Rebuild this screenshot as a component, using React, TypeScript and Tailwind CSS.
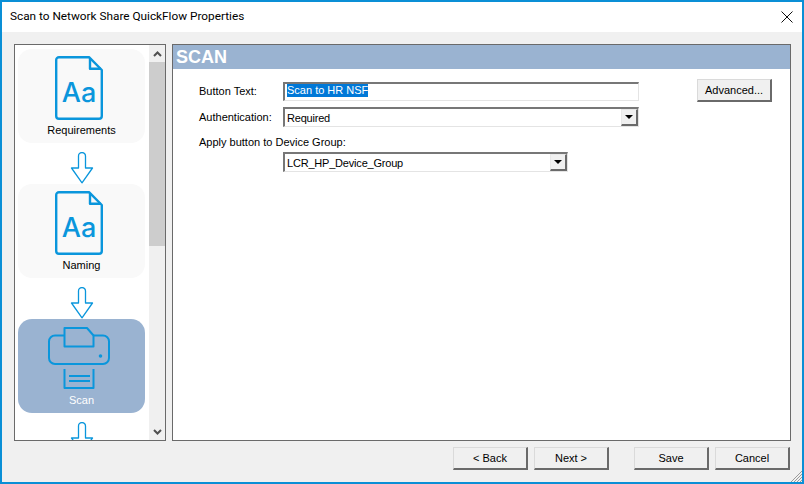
function DocIcon() {
  return (
    <svg width="48" height="64" viewBox="0 0 48 64" fill="none" className="block">
      <path d="M4 1.200H34L46.800 14V60a2.800 2.800 0 0 1-2.800 2.800H4A2.800 2.800 0 0 1 1.200 60V4A2.800 2.800 0 0 1 4 1.200Z" stroke="#0a96dc" strokeWidth="2.400" strokeLinejoin="round" />
      <path d="M35 2V12.800H46" stroke="#0a96dc" strokeWidth="2.400" strokeLinejoin="round" />
      <text x="24" y="46" textAnchor="middle" fill="#0a96dc" fontSize="27" fontFamily="Inter, 'Liberation Sans', sans-serif" fontWeight="500">Aa</text>
    </svg>
  );
}

function PrinterIcon() {
  return (
    <svg width="62" height="62" viewBox="0 0 62 62" fill="none" className="mt-[1px] block" stroke="#0a96dc" strokeWidth="2">
      <path d="M16 8.500H7a6 6 0 0 0-6 6V31a6 6 0 0 0 6 6H55a6 6 0 0 0 6-6V14.500a6 6 0 0 0-6-6H45" />
      <path d="M16.500 1H39L45.500 8.500V19.500H16.500Z" strokeLinejoin="round" />
      <circle cx="52.500" cy="29" r="0.800" fill="#0a96dc" />
      <path d="M16.500 42V61H45.500V42" strokeLinejoin="round" />
      <path d="M21 49H42M21 54H42" />
    </svg>
  );
}

function DownArrow() {
  return (
    <svg width="24" height="32" viewBox="0 0 24 32" fill="none" className="block">
      <path d="M8.500 16V4a3.500 3.500 0 0 1 7 0V16H22.500L12 30.800 1.500 16Z" fill="#fff" stroke="#0a96dc" strokeWidth="1.300" strokeLinejoin="round" />
    </svg>
  );
}

function NavCard({ label, active, icon }: { label: string; active?: boolean; icon: React.ReactNode }) {
  return (
    <div className={`flex h-[94px] w-[127px] shrink-0 flex-col items-center rounded-[14px] ${active ? "bg-[#9ab3d1] text-white" : "bg-[#f9f9f9] text-black"}`}>
      <div className="mt-[7px] flex h-[66px] items-start justify-center pr-[5px]">{icon}</div>
      <div className="mt-[1px] text-[11px] leading-[14px]">{label}</div>
    </div>
  );
}

function Arrow() {
  return (
    <div className="flex h-[41px] w-[127px] shrink-0 justify-center pt-[9px]">
      <DownArrow />
    </div>
  );
}

function WinButton({ label, className = "" }: { label: string; className?: string }) {
  return (
    <button className={`flex h-[23px] w-[75px] items-center justify-center border border-b-2 border-r-2 border-[#eeeeee] border-b-[#6a6a6a] border-r-[#6a6a6a] border-l-[#dadada] border-t-[#dadada] bg-[#f0f0f0] text-[11px] text-black ${className}`}>
      {label}
    </button>
  );
}

function SelectBox({ value, widthClass }: { value: string; widthClass: string }) {
  return (
    <div className={`flex h-5 items-stretch border-2 border-b border-r border-[#e4e4e4] border-l-[#777777] border-t-[#777777] bg-white ${widthClass}`}>
      <div className="flex-1 truncate pl-[2px] pt-[2px] text-[11px] leading-[14px] tracking-[-0.2px] text-black">{value}</div>
      <div className="flex w-[17px] items-center justify-center border-b-2 border-r-2 border-[#6a6a6a] border-l border-t border-l-[#e8e8e8] border-t-[#e8e8e8] bg-[#f0f0f0]">
        <svg width="8" height="4" viewBox="0 0 8 4"><path d="M0 0H8L4 4Z" fill="#000" /></svg>
      </div>
    </div>
  );
}

export default function App() {
  return (
    <div className="flex h-[484px] w-[804px] flex-col overflow-hidden border-2 border-[#0a8fd6] bg-[#f0f0f0] font-['Liberation_Sans',sans-serif]">
      <div className="flex h-[30px] shrink-0 items-center justify-between bg-white pl-2 pr-[9px]">
        <span className="font-['Roboto',sans-serif] text-[11.8px] text-black">Scan to Network Share QuickFlow Properties</span>
        <svg width="12" height="12" viewBox="0 0 12 12" stroke="#111" strokeWidth="1" fill="none"><path d="M.5.500L11.500 11.500M11.500.500L.5 11.500" /></svg>
      </div>

      <div className="flex h-[409px] shrink-0 gap-[6px] pl-3 pr-3 pt-3">
        <div className="flex h-[397px] w-[152px] shrink-0 border border-[#6a6a6a] bg-white">
          <div className="flex w-[134px] shrink-0 flex-col overflow-hidden pl-[3px] pt-[4px]">
            <NavCard label="Requirements" icon={<DocIcon />} />
            <Arrow />
            <NavCard label="Naming" icon={<DocIcon />} />
            <Arrow />
            <NavCard label="Scan" active icon={<PrinterIcon />} />
            <Arrow />
          </div>
          <div className="flex w-[16px] shrink-0 flex-col bg-[#f0f0f0]">
            <div className="flex h-[17px] items-center justify-center">
              <svg width="9" height="6" viewBox="0 0 9 6" fill="none" stroke="#505050" strokeWidth="2"><path d="M1 5L4.500 1.500 8 5" /></svg>
            </div>
            <div className="h-[184px] bg-[#cdcdcd]" />
            <div className="flex-1" />
            <div className="flex h-[17px] items-center justify-center">
              <svg width="9" height="6" viewBox="0 0 9 6" fill="none" stroke="#505050" strokeWidth="2"><path d="M1 1L4.500 4.500 8 1" /></svg>
            </div>
          </div>
        </div>

        <div className="flex h-[397px] w-[619px] shrink-0 flex-col border border-[#6a6a6a] bg-white">
          <div className="flex h-6 shrink-0 items-center bg-[#9ab3d1] pl-[3px] text-[18px] font-bold leading-6 text-white">SCAN</div>
          <div className="flex items-start pl-[26px]">
            <div className="flex w-[440px] shrink-0 flex-col pt-[13px] text-[11px] text-black">
              <div className="flex items-center">
                <span className="w-[84px] shrink-0 pb-[1px]">Button Text:</span>
                <div className="flex h-[19px] w-[356px] items-start border-2 border-b border-r border-[#e4e4e4] border-l-[#777777] border-t-[#777777] bg-white pl-[2px]">
                  <span className="bg-[#0078d7] leading-[13px] text-white">Scan to HR NSF</span>
                </div>
              </div>
              <div className="mt-[6px] flex items-center">
                <span className="w-[84px] shrink-0">Authentication:</span>
                <SelectBox value="Required" widthClass="w-[356px]" />
              </div>
              <div className="mt-[8px] leading-[14px]">Apply button to Device Group:</div>
              <div className="mt-[3px] pl-[84px]">
                <SelectBox value="LCR_HP_Device_Group" widthClass="w-[285px]" />
              </div>
            </div>
            <WinButton label="Advanced..." className="ml-[58px] mt-[10px]" />
          </div>
        </div>
      </div>

      <div className="relative flex flex-1 items-start pl-[451px] pt-[6px]">
        <WinButton label="< Back" />
        <WinButton label="Next >" className="ml-[6px]" />
        <WinButton label="Save" className="ml-[25px]" />
        <WinButton label="Cancel" className="ml-[6px]" />
        <svg width="12" height="12" viewBox="0 0 12 12" className="absolute bottom-0 right-0" stroke="#9a9a9a" strokeWidth="1"><path d="M12 1L1 12M12 4L4 12M12 7L7 12M12 10L10 12" /></svg>
      </div>
    </div>
  );
}
